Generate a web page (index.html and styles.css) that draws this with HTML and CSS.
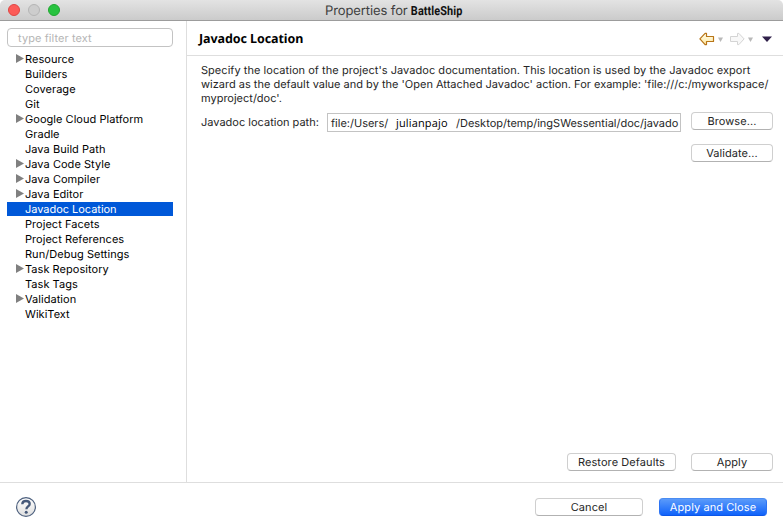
FILE: index.html
```html
<!DOCTYPE html>
<html lang="en">
<head>
<meta charset="utf-8">
<title>Properties for BattleShip</title>
<link rel="stylesheet" href="styles.css">
</head>
<body>
<div class="window">
  <header class="titlebar">
    <div class="lights"><i class="light red"></i><i class="light gray"></i><i class="light green"></i></div>
    <div class="title"><span class="title-text">Properties for</span><span class="project">BattleShip</span></div>
  </header>
  <div class="body">
    <nav class="sidebar">
      <div class="filter">type filter text</div>
      <ul class="tree">
        <li class="parent"><span>Resource</span></li>
        <li><span>Builders</span></li>
        <li><span>Coverage</span></li>
        <li><span>Git</span></li>
        <li class="parent"><span>Google Cloud Platform</span></li>
        <li><span>Gradle</span></li>
        <li><span>Java Build Path</span></li>
        <li class="parent"><span>Java Code Style</span></li>
        <li class="parent"><span>Java Compiler</span></li>
        <li class="parent"><span>Java Editor</span></li>
        <li class="selected"><span>Javadoc Location</span></li>
        <li><span>Project Facets</span></li>
        <li><span>Project References</span></li>
        <li><span>Run/Debug Settings</span></li>
        <li class="parent"><span>Task Repository</span></li>
        <li><span>Task Tags</span></li>
        <li class="parent"><span>Validation</span></li>
        <li><span>WikiText</span></li>
      </ul>
    </nav>
    <main class="page">
      <div class="page-head">
        <h1>Javadoc Location</h1>
        <svg class="nav" width="76" height="14" viewBox="0 0 76 14">
          <defs><linearGradient id="gold" x1="0" y1="0" x2="0" y2="1"><stop offset="0" stop-color="#fffef0"/><stop offset="1" stop-color="#ffe9a0"/></linearGradient></defs>
          <path d="M.9 6.9 6.1 1.4H7.5V4.5H14.5V9.5H7.5V12.6H6.1Z" fill="url(#gold)" stroke="#b87518" stroke-width="1.200" stroke-linejoin="round"/>
          <path d="M19 5.500h5l-2.500 4.500z" fill="#b9b9b9"/>
          <path d="M45.100 6.900 39.900 1.400H38.500V4.500H31.500V9.500H38.500V12.600H39.900Z" fill="#f8f8f8" stroke="#d4d4d4" stroke-linejoin="round"/>
          <path d="M49 5.500h5l-2.500 4.500z" fill="#b9b9b9"/>
          <path d="M63 4.500h10L68 10z" fill="#30204a"/>
        </svg>
      </div>
      <div class="content">
        <p class="desc"><span class="l1">Specify the location of the project's Javadoc documentation. This location is used by the Javadoc export</span><br><span class="l2">wizard as the default value and by the 'Open Attached Javadoc' action. For example: 'file:///c:/myworkspace/</span><br><span class="l2">myproject/doc'.</span></p>
        <div class="row">
          <label>Javadoc location path:</label>
          <div class="field"><span class="pre">file:/Users/</span><span class="user">julianpajo</span><span class="post">/Desktop/temp/ingSWessential/doc/javado</span></div>
          <div class="side"><button>Browse...</button><button>Validate...</button></div>
        </div>
      </div>
      <div class="page-actions"><button class="restore">Restore Defaults</button><button>Apply</button></div>
    </main>
  </div>
  <footer class="footer">
    <svg class="help" width="22" height="22" viewBox="0 0 22 22">
      <defs><linearGradient id="disc" x1="0" y1="0" x2="0" y2="1"><stop offset="0" stop-color="#fff"/><stop offset="1" stop-color="#dedede"/></linearGradient></defs>
      <circle cx="11" cy="11" r="9.400" fill="url(#disc)" stroke="#4e617f" stroke-width="1.200"/>
      <path d="M7.300 8.200C7.300 5.900 8.900 5 11 5c2.300 0 3.700 1.100 3.700 2.900 0 2.500-3.300 2.600-3.300 5.300" fill="none" stroke="#455878" stroke-width="2.300"/>
      <circle cx="11.200" cy="16.300" r="1.500" fill="#455878"/>
    </svg>
    <div class="footer-actions"><button class="wide">Cancel</button><button class="wide primary">Apply and Close</button></div>
  </footer>
</div>
</body>
</html>
```

FILE: styles.css
```css
* { box-sizing: border-box; }
body { margin: 0; background: #fff; font: 11px/15px Inter, "Liberation Sans", sans-serif; color: #262626; text-rendering: geometricPrecision; }
.window { width: 783px; height: 529px; display: flex; flex-direction: column; overflow: hidden; white-space: nowrap; }
.titlebar { height: 21px; flex: none; display: flex; align-items: center; background: linear-gradient(#e3e3e3, #cbcbcb); border-bottom: 1px solid #9c9c9c; border-radius: 5px 5px 0 0; }
.lights { display: flex; gap: 8px; padding-left: 8px; width: 325px; }
.light { width: 12px; height: 12px; border-radius: 50%; border: 1px solid; }
.red { background: #fc5b57; border-color: #df4643; }
.gray { background: #cdcdcd; border-color: #b5b5b5; }
.green { background: #28c340; border-color: #1fa72f; }
.title { display: flex; font-size: 13px; color: #3f3f3f; line-height: 20px; padding-top: 2px; }
.title-text { width: 85px; letter-spacing: -.1px; }
.project { font: bold 12.5px/21px Roboto, sans-serif; color: #111; transform: scaleX(.87); transform-origin: left; padding-left: 1px; letter-spacing: .1px; }
.body { flex: 1; display: flex; min-height: 0; }
.sidebar { width: 187px; border-right: 1px solid #dedede; padding: 7px 13px 0 7px; }
.filter { height: 19px; border: 1px solid #c3c3c3; border-radius: 4px; padding-left: 10px; line-height: 18px; color: #b5b5b5; letter-spacing: .08px; }
.tree { list-style: none; margin: 5px 0 0; padding: 0; color: #000; letter-spacing: .04px; }
.tree li { height: 15px; padding-left: 18px; display: flex; }
.tree .parent { padding-left: 9px; }
.parent::before { content: ""; width: 8px; height: 9px; margin: 2px 1px 0 0; background: #808080; clip-path: polygon(0 0, 100% 50%, 0 100%); }
.tree .selected { color: #fff; background: linear-gradient(#0058d8, #0058d8) 0 0 / 100% 14px no-repeat; letter-spacing: -.03px; }
.page { flex: 1; min-width: 0; display: flex; flex-direction: column; }
.page-head { height: 35px; border-bottom: 1px solid #dedede; display: flex; justify-content: space-between; align-items: center; padding: 0 8px 0 12px; }
h1 { margin: 2px 0 0; font: bold 12.5px/18px "Noto Sans", sans-serif; letter-spacing: -.08px; color: #000; }
.nav { display: block; margin-top: 2px; }
.content { padding: 7px 10px 0 14px; }
.desc { margin: 0; line-height: 14px; }
.l1 { letter-spacing: .04px; }
.l2 { letter-spacing: 0; }
.row { display: flex; margin-top: 7px; }
label { width: 126px; padding-top: 3px; letter-spacing: 0; }
.field { width: 354px; height: 19px; margin-top: 1px; border: 1px solid #c3c3c3; line-height: 18px; padding-left: 3px; display: flex; overflow: hidden; }
.pre { width: 65px; }
.user { width: 60px; font-family: "Open Sans", sans-serif; color: #000; letter-spacing: .15px; line-height: 19px; }
.side { display: flex; flex-direction: column; gap: 14px; margin-left: 10px; }
button { font: inherit; color: #262626; height: 18px; width: 82px; padding: 0; line-height: 16px; text-align: center; background: #fff; border: 1px solid #cfcfcf; border-bottom-color: #b2b2b2; border-radius: 4px; letter-spacing: .08px; text-rendering: inherit; }
.page-actions { margin-top: auto; display: flex; justify-content: flex-end; gap: 15px; padding: 0 10px 11px 0; }
.restore { width: 109px; }
.footer { height: 47px; flex: none; border-top: 1px solid #dedede; display: flex; justify-content: space-between; padding: 13px 16px 0 15px; }
.footer-actions { display: flex; gap: 16px; padding-top: 2px; }
.wide { width: 108px; }
.primary { color: #fff; background: linear-gradient(#5b9bfa, #1063fa); border-color: #4a8cf2 #2d74f4 #0c56e8; }
```
